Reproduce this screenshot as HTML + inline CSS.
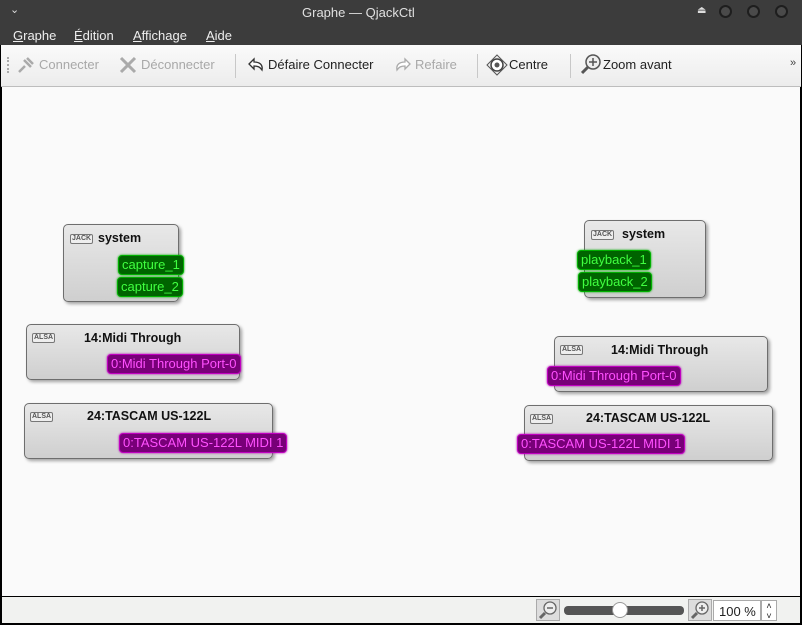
<!DOCTYPE html>
<html><head><meta charset="utf-8"><style>
*{margin:0;padding:0;box-sizing:border-box}
body{width:802px;height:625px;overflow:hidden;background:#000;font-family:"Liberation Sans","DejaVu Sans",sans-serif;position:relative}
.abs{position:absolute}
#title{left:0;top:0;width:802px;height:45px;background:#3c3c3c;color:#e6e6e6}
#tb{left:1px;top:45px;width:800px;height:42px;background:linear-gradient(#fafafa,#ececec);border-bottom:1px solid #bdbdbd;font-size:13px;color:#222}
#canvas{left:2px;top:87px;width:798px;height:509px;background:#fafafa}
#status{left:2px;top:597px;width:798px;height:26px;background:#f1f2f0}
.node{position:absolute;border:1px solid #6e6e6e;border-radius:5px;background:linear-gradient(#e8e8e8,#cfcfcf);box-shadow:2px 2px 3px rgba(0,0,0,.35)}
.nt{position:absolute;font-weight:bold;font-size:12.5px;color:#111;white-space:nowrap}
.badge{position:absolute;font-size:7px;font-weight:bold;color:#555;border:1px solid #777;border-radius:2px;padding:0 1px;line-height:8px;background:#eee}
.pg,.pm{position:absolute;height:20px;border-radius:4px;font-size:13px;line-height:18px;padding:0 3px;white-space:nowrap}
.pg{background:#006400;border:1px solid #00b000;color:#40ff40;box-shadow:0 0 2px #0a0}
.pm{background:#780078;border:1px solid #c000c0;color:#ff50ff;box-shadow:0 0 2px #a0a}
.tbi{position:absolute;top:12px;white-space:nowrap}
.dis{color:#a8a8a8}
.sep{position:absolute;top:9px;width:1px;height:24px;background:#c8c8c8}
.menu span{position:absolute;top:28px;font-size:13px;color:#eee}
u{text-decoration:underline}
.wb{position:absolute;top:5px;width:13px;height:13px;border-radius:7px;border:2px solid #1e1e1e;background:#4a4a4a}
</style></head><body>
<div id="title" class="abs">
 <div class="abs" style="left:10px;top:3px;font-size:11px;color:#ddd">&#8964;</div>
 <div class="abs" style="left:302px;top:5px;font-size:13px;color:#e0e0e0">Graphe — QjackCtl</div>
 <div class="abs" style="left:697px;top:5px;font-size:10px;color:#ddd">&#9167;</div>
 <div class="wb" style="left:719px"></div>
 <div class="wb" style="left:747px"></div>
 <div class="wb" style="left:775px"></div>
 <div class="menu"><span style="left:13px"><u>G</u>raphe</span><span style="left:74px"><u>É</u>dition</span><span style="left:133px"><u>A</u>ffichage</span><span style="left:206px"><u>A</u>ide</span></div>
</div>
<div id="tb" class="abs">
 <div class="abs" style="left:6px;top:12px;width:2px;height:16px;border-left:2px dotted #aaa"></div>
 <svg class="abs" style="left:15px;top:10px" width="20" height="20"><path d="M3 17 L9 11 M8 5 L15 12 M11 3 L17 9" stroke="#aaa" stroke-width="2.5" fill="none"/></svg>
 <span class="tbi dis" style="left:38px">Connecter</span>
 <svg class="abs" style="left:117px;top:10px" width="20" height="20"><path d="M3 3 L17 17 M17 3 L3 17" stroke="#aaa" stroke-width="3" fill="none"/></svg>
 <span class="tbi dis" style="left:140px">Déconnecter</span>
 <div class="sep" style="left:234px"></div>
 <svg class="abs" style="left:246px;top:12px" width="18" height="16"><path d="M2 7 L7 2 L7 5 C13 5 16 8 15 13 C13 10 11 9 7 9 L7 12 Z" stroke="#333" stroke-width="1.3" fill="#fff"/></svg>
 <span class="tbi" style="left:267px">Défaire Connecter</span>
 <svg class="abs" style="left:393px;top:12px" width="18" height="16"><path d="M16 7 L11 2 L11 5 C5 5 2 8 3 13 C5 10 7 9 11 9 L11 12 Z" stroke="#aaa" stroke-width="1.3" fill="#fff"/></svg>
 <span class="tbi dis" style="left:414px">Refaire</span>
 <div class="sep" style="left:476px"></div>
 <svg class="abs" style="left:485px;top:9px" width="22" height="22"><path d="M11 1 L21 11 L11 21 L1 11 Z" stroke="#555" fill="#eee"/><circle cx="11" cy="11" r="6" stroke="#444" stroke-width="1.5" fill="#fff"/><circle cx="11" cy="11" r="2.5" fill="#555"/></svg>
 <span class="tbi" style="left:508px">Centre</span>
 <div class="sep" style="left:569px"></div>
 <svg class="abs" style="left:579px;top:8px" width="22" height="22"><circle cx="13" cy="9" r="7" stroke="#555" stroke-width="1.5" fill="#eee"/><path d="M13 5 V13 M9 9 H17" stroke="#555" stroke-width="1.5"/><path d="M8 14 L2 20" stroke="#555" stroke-width="3"/></svg>
 <span class="tbi" style="left:602px">Zoom avant</span>
 <span class="tbi" style="left:789px;font-size:11px;color:#444">»</span>
</div>
<div id="canvas" class="abs">
 <div class="node" style="left:61px;top:137px;width:116px;height:78px"></div>
 <div class="badge" style="left:68px;top:147px">JACK</div>
 <div class="nt" style="left:96px;top:144px">system</div>
 <div class="pg" style="left:116px;top:168px">capture_1</div>
 <div class="pg" style="left:115px;top:190px">capture_2</div>

 <div class="node" style="left:24px;top:237px;width:214px;height:56px"></div>
 <div class="badge" style="left:30px;top:246px">ALSA</div>
 <div class="nt" style="left:82px;top:244px">14:Midi Through</div>
 <div class="pm" style="left:105px;top:267px">0:Midi Through Port-0</div>

 <div class="node" style="left:22px;top:316px;width:249px;height:56px"></div>
 <div class="badge" style="left:28px;top:325px">ALSA</div>
 <div class="nt" style="left:85px;top:322px">24:TASCAM US-122L</div>
 <div class="pm" style="left:117px;top:346px">0:TASCAM US-122L MIDI 1</div>

 <div class="node" style="left:582px;top:133px;width:122px;height:78px"></div>
 <div class="badge" style="left:589px;top:143px">JACK</div>
 <div class="nt" style="left:620px;top:140px">system</div>
 <div class="pg" style="left:575px;top:163px">playback_1</div>
 <div class="pg" style="left:576px;top:185px">playback_2</div>

 <div class="node" style="left:552px;top:249px;width:214px;height:56px"></div>
 <div class="badge" style="left:558px;top:258px">ALSA</div>
 <div class="nt" style="left:609px;top:256px">14:Midi Through</div>
 <div class="pm" style="left:545px;top:279px">0:Midi Through Port-0</div>

 <div class="node" style="left:522px;top:318px;width:249px;height:56px"></div>
 <div class="badge" style="left:528px;top:327px">ALSA</div>
 <div class="nt" style="left:584px;top:324px">24:TASCAM US-122L</div>
 <div class="pm" style="left:515px;top:347px">0:TASCAM US-122L MIDI 1</div>
</div>
<div id="status" class="abs">
 <div class="abs" style="left:534px;top:2px;width:24px;height:22px;border:1px solid #aaa;background:#ddd"><svg width="22" height="20"><circle cx="13" cy="8" r="6" stroke="#666" stroke-width="1.3" fill="#eee"/><path d="M10 8 H16" stroke="#666" stroke-width="1.5"/><path d="M8 13 L3 18" stroke="#666" stroke-width="3"/></svg></div>
 <div class="abs" style="left:562px;top:9px;width:120px;height:9px;border-radius:4px;background:#555"></div>
 <div class="abs" style="left:610px;top:5px;width:16px;height:16px;border-radius:8px;background:#fff;border:1px solid #999"></div>
 <div class="abs" style="left:686px;top:2px;width:24px;height:22px;border:1px solid #aaa;background:#ddd"><svg width="22" height="20"><circle cx="13" cy="8" r="6" stroke="#666" stroke-width="1.3" fill="#eee"/><path d="M13 5 V11 M10 8 H16" stroke="#666" stroke-width="1.5"/><path d="M8 13 L3 18" stroke="#666" stroke-width="3"/></svg></div>
 <div class="abs" style="left:711px;top:3px;width:48px;height:21px;border:1px solid #aaa;background:#fff;font-size:13px;padding:3px 0 0 5px;color:#222">100 %</div>
 <div class="abs" style="left:759px;top:3px;width:16px;height:21px;border:1px solid #aaa;background:#fff;font-size:9px;text-align:center;line-height:10px;color:#222">&#708;<br>&#709;</div>
</div>
</body></html>
